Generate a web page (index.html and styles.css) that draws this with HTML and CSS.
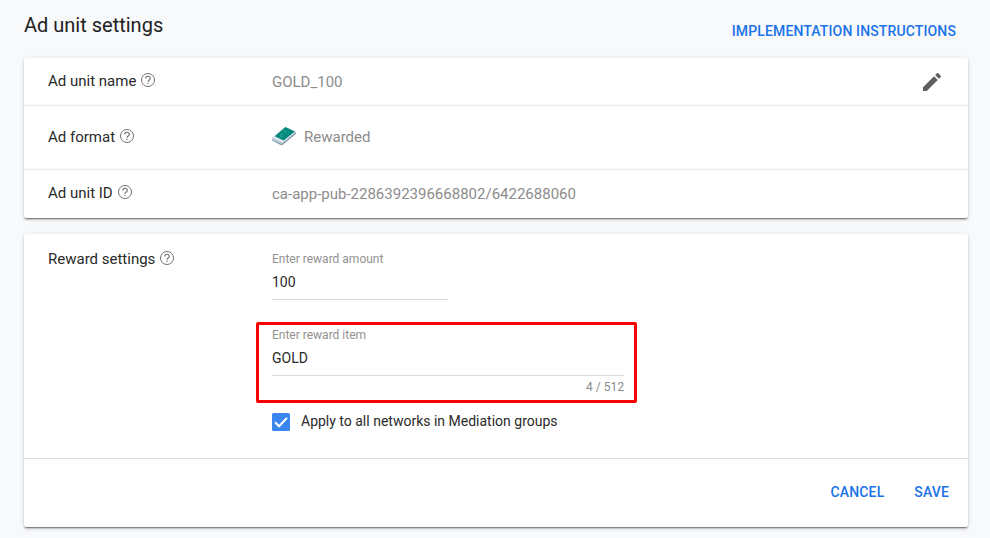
FILE: index.html
```
<!DOCTYPE html>
<html lang="en">
<head>
<meta charset="utf-8">
<title>Ad unit settings</title>
<link rel="stylesheet" href="styles.css">
</head>
<body>
<svg class="defs" width="0" height="0" aria-hidden="true">
  <symbol id="help" viewBox="0 0 16 16">
    <circle cx="8" cy="8" r="6.500" fill="none" stroke="#707070" stroke-width="1"/>
    <path d="M5.700 6.600a2.300 2.300 0 0 1 4.600 0c0 1.400-2.300 1.500-2.300 3.200" fill="none" stroke="#707070" stroke-width="1.100"/>
    <path d="M7.400 10.800h1.200v1.200H7.400z" fill="#707070"/>
  </symbol>
</svg>
<header class="page-header">
  <h1>Ad unit settings</h1>
  <a class="action">IMPLEMENTATION INSTRUCTIONS</a>
</header>
<main>
  <section class="card">
    <div class="row">
      <div class="label">Ad unit name<svg class="help"><use href="#help"/></svg></div>
      <div class="value">GOLD_100</div>
      <svg class="edit" viewBox="0 0 24 24"><path d="M3 17.250V21h3.750L17.810 9.940l-3.750-3.750L3 17.250zM20.710 7.040a1 1 0 0 0 0-1.410l-2.340-2.340a1 1 0 0 0-1.410 0l-1.830 1.830 3.750 3.750 1.830-1.830z"/></svg>
    </div>
    <div class="row tall">
      <div class="label">Ad format<svg class="help"><use href="#help"/></svg></div>
      <div class="value format">
        <svg class="phone" viewBox="0 0 24 20">
          <path d="M0 12.200 12.500 1.300 24 6.200v1.600L10.500 19 8.600 18.900 0 14.500z" fill="#8099a9"/>
          <path d="M0 11.700 12.500 1 24 6 10 17.400z" fill="#dce6ed"/>
          <path d="M0 11.700 10 16.300v2L0 13.700z" fill="#bccbd6"/>
          <path d="M2.800 10.300 13.500 1.100 22.900 5.500 11.600 14.600z" fill="#00897b"/>
          <g fill="none" stroke="#4db6a5" stroke-width=".5"><circle cx="9.800" cy="9.500" r="1.500"/><circle cx="13" cy="5.700" r="1.100"/><path d="m15 8 2-1.300M15.500 4.500l1.500.7"/></g>
        </svg>
        <span>Rewarded</span>
      </div>
    </div>
    <div class="row last">
      <div class="label">Ad unit ID<svg class="help"><use href="#help"/></svg></div>
      <div class="value">ca-app-pub-2286392396668802/6422688060</div>
    </div>
  </section>
  <section class="card reward">
    <div class="reward-body">
      <div class="label">Reward settings<svg class="help"><use href="#help"/></svg></div>
      <div class="fields">
        <div class="field amount">
          <div class="caption">Enter reward amount</div>
          <div class="entry">100</div>
        </div>
        <div class="highlight">
          <div class="field">
            <div class="caption">Enter reward item</div>
            <div class="entry">GOLD</div>
          </div>
          <div class="counter">4 / 512</div>
        </div>
        <div class="check">
          <svg class="box" viewBox="0 0 18 18"><rect width="18" height="18" rx="1.500" fill="#3b86ee"/><path d="m3.100 9.300 3.900 3.900 8-8.300" fill="none" stroke="#fff" stroke-width="2"/></svg>
          <span>Apply to all networks in Mediation groups</span>
        </div>
      </div>
    </div>
    <footer class="actions">
      <a class="action">CANCEL</a>
      <a class="action">SAVE</a>
    </footer>
  </section>
</main>
</body>
</html>
```
FILE: styles.css
```
* { box-sizing: border-box; }
body {
  margin: 0;
  height: 538px;
  overflow: hidden;
  background: #f8f9fb;
  color: #2a2a2a;
  font-family: Roboto, sans-serif;
}
svg { flex: none; }
.defs { position: absolute; }
.page-header {
  height: 58px;
  padding: 11px 34px 0 24px;
  display: flex;
  justify-content: space-between;
}
h1 {
  margin: 0;
  color: #212121;
  font-size: 20px;
  line-height: 28px;
  font-weight: 400;
}
.action {
  color: #1a73e8;
  font-size: 14px;
  line-height: 20px;
  font-weight: 500;
  letter-spacing: 0.130px;
}
.page-header .action { padding-top: 10px; }
main {
  padding: 0 22px 0 24px;
  display: flex;
  flex-direction: column;
  gap: 16px;
}
.card {
  background: #fff;
  border-radius: 2px;
  box-shadow: 0 2px 2px rgba(0,0,0,.14), 0 1px 5px rgba(0,0,0,.12), 0 3px 1px -2px rgba(0,0,0,.2), 0 1px 1px rgba(0,0,0,.2);
}
.row {
  height: 48px;
  padding: 0 24px;
  display: flex;
  align-items: center;
  border-bottom: 1px solid #ebebeb;
  box-shadow: inset 0 -1px 0 #fafafa;
}
.row.tall { height: 64px; padding-bottom: 2px; }
.row.last { border: 0; box-shadow: none; }
.label {
  width: 224px;
  display: flex;
  align-items: center;
  gap: 4px;
  font-size: 15px;
  line-height: 20px;
}
.row .label { padding-bottom: 2px; }
.row.tall .label { padding-bottom: 0; }
.help { width: 16px; height: 16px; margin-top: -2px; }
.value {
  flex: 1;
  color: #8c8c8c;
  font-size: 15px;
  line-height: 20px;
}
.format { display: flex; align-items: center; gap: 8px; }
.phone { width: 24px; height: 20px; margin-top: -1px; }
.edit { width: 24px; height: 24px; fill: #616161; }
.reward { height: 293px; }
.reward-body {
  height: 225px;
  padding: 15px 24px 0;
  display: flex;
  align-items: flex-start;
  border-bottom: 1px solid #dcdcdc;
}
.fields { width: 352px; }
.caption {
  color: #919191;
  font-size: 12px;
  line-height: 16px;
}
.entry {
  height: 33px;
  padding-top: 5px;
  font-size: 14px;
  line-height: 20px;
  border-bottom: 1px solid #dcdcdc;
}
.amount { width: 176px; padding-top: 2px; }
.highlight {
  width: 381px;
  height: 81px;
  margin: 22px 0 0 -16px;
  padding: 2px 10px 0 13px;
  border: 3px solid #f00;
  border-radius: 2px;
}
.counter {
  padding-top: 3px;
  text-align: right;
  color: #8a8a8a;
  font-size: 12px;
  line-height: 16px;
}
.check {
  margin-top: 8px;
  display: flex;
  gap: 11px;
  font-size: 14px;
  line-height: 20px;
}
.box { width: 18px; height: 18px; margin-top: 2px; }
.actions {
  height: 68px;
  padding: 23px 19px 0;
  display: flex;
  justify-content: flex-end;
  gap: 30px;
}
```
